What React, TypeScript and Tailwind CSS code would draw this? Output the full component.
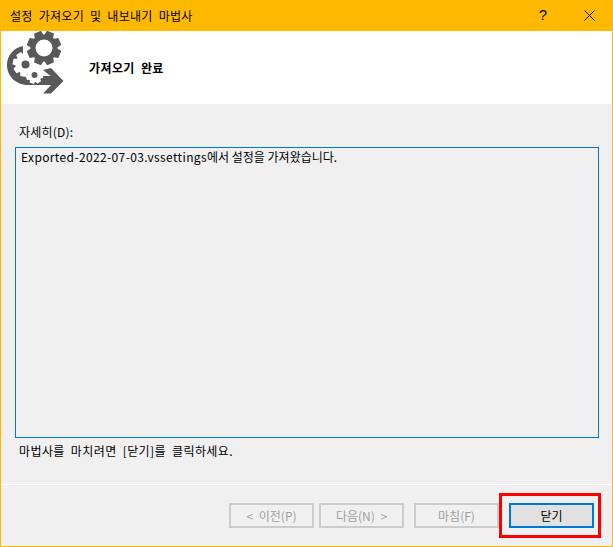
const KO = "font-['Noto_Sans_CJK_KR','Liberation_Sans',sans-serif]";

function gearPath(cx: number, cy: number, outer: number, inner: number, teeth: number, start = 0) {
  const pts: string[] = [];
  const step = (Math.PI * 2) / teeth;
  for (let i = 0; i < teeth; i++) {
    const a = start + i * step;
    const corners: [number, number][] = [
      [-0.5, inner],
      [-0.3, outer],
      [0.3, outer],
      [0.5, inner],
    ];
    for (const [off, r] of corners) {
      const t = a + off * step * 0.9;
      pts.push(`${(cx + Math.cos(t) * r).toFixed(2)},${(cy + Math.sin(t) * r).toFixed(2)}`);
    }
  }
  return `M${pts.join("L")}Z`;
}

function circlePath(cx: number, cy: number, r: number) {
  return `M${cx - r},${cy}a${r},${r} 0 1,0 ${r * 2},0a${r},${r} 0 1,0 ${-r * 2},0Z`;
}

function WizardIcon() {
  return (
    <svg width="70" height="73" viewBox="0 0 70 73" className="shrink-0">
      <g transform="translate(0,-31)">
        {/* 화살표 몸통 */}
        <path fill="#58595b" d="M22 46 C12 48 6 56 6 65 C6 76 15 85 27 85 L52 85 L52 76 L30 76 L22 60Z" />
        <path fill="#58595b" d="M42 70 L50 68 L62.5 81 L50 93.5 L42 93.5 L52 83 L52 78Z" />
        {/* 흰색 톱니 */}
        <path fill="#ffffff" d={gearPath(24.5, 64, 13, 10, 8, 0.2)} />
        <circle cx="24.5" cy="64.5" r="4" fill="#58595b" />
        <path fill="#ffffff" d={gearPath(33.5, 75, 9, 7, 7, 0.1)} />
        <circle cx="33.5" cy="75" r="3" fill="#58595b" />
        {/* 큰 톱니 */}
        <path fill="#58595b" fillRule="evenodd" d={gearPath(43, 48, 17.5, 13.5, 8, 0.39) + circlePath(43, 48, 8.5)} />
      </g>
    </svg>
  );
}

function WizardButton({ label, primary }: { label: string; primary?: boolean }) {
  return (
    <button
      className={
        primary
          ? "flex h-[25px] w-[85px] items-center justify-center border-2 border-[#0078d7] bg-[#e1e1e1] text-[12px] text-black"
          : "flex h-[25px] w-[85px] items-center justify-center border-2 border-[#cccccc] bg-[#f0f0f0] text-[12px] text-[#a0a0a0] [word-spacing:3px]"
      }
    >
      {label}
    </button>
  );
}

export default function App() {
  return (
    <div className={`${KO} flex h-[547px] w-[613px] flex-col border-x border-b border-[#ffb900] bg-[#f0f0f0] text-[12px] text-black`}>
      {/* 제목 표시줄 */}
      <div className="-mx-px flex h-[31px] shrink-0 items-center bg-[#ffb900] pl-[10px]">
        <span className="flex-1 text-[12px] tracking-[0.3px] [word-spacing:3px]">설정 가져오기 및 내보내기 마법사</span>
        <span className="mr-[37px] font-['Liberation_Sans',sans-serif] text-[15px]">?</span>
        <svg width="11" height="11" viewBox="0 0 11 11" className="mr-[18px]">
          <path d="M0.5 0.5 L10.5 10.5 M10.5 0.5 L0.5 10.5" stroke="#000000" strokeWidth="1" fill="none" />
        </svg>
      </div>

      {/* 헤더 */}
      <div className="flex h-[73px] shrink-0 items-center overflow-hidden bg-white">
        <WizardIcon />
        <span className="ml-[18px] text-[12px] font-bold tracking-[0.4px] [word-spacing:3px]">가져오기 완료</span>
      </div>

      {/* 본문 */}
      <div className="flex flex-1 flex-col px-[14px]">
        <div className="mt-[19px] h-[18px] pl-[4px] leading-[18px] tracking-[0.2px]">자세히(D):</div>
        <div className="mt-[6px] h-[291px] w-[584px] border border-[#0078d7] px-[5px] leading-[18px]">
          <span className="tracking-[0.37px]">Exported-2022-07-03.vssettings</span>
          <span>에서 설정을 가져왔습니다.</span>
        </div>
        <div className="mt-[4px] pl-[4px] leading-[18px] tracking-[0.4px] [word-spacing:3px]">마법사를 마치려면 [닫기]를 클릭하세요.</div>
      </div>

      {/* 버튼 영역 */}
      <div className="h-[62px] shrink-0 border-t border-white">
        <div className="ml-[228px] mt-[18px] flex">
          <WizardButton label="< 이전(P)" />
          <div className="ml-[5px]">
            <WizardButton label="다음(N) >" />
          </div>
          <div className="ml-[10px]">
            <WizardButton label="마침(F)" />
          </div>
          <div className="relative ml-[10px]">
            <WizardButton label="닫기" primary />
            <div className="absolute left-[-10px] top-[-10px] h-[45px] w-[102px] border-[3px] border-[#ff0000]" />
          </div>
        </div>
      </div>
    </div>
  );
}
